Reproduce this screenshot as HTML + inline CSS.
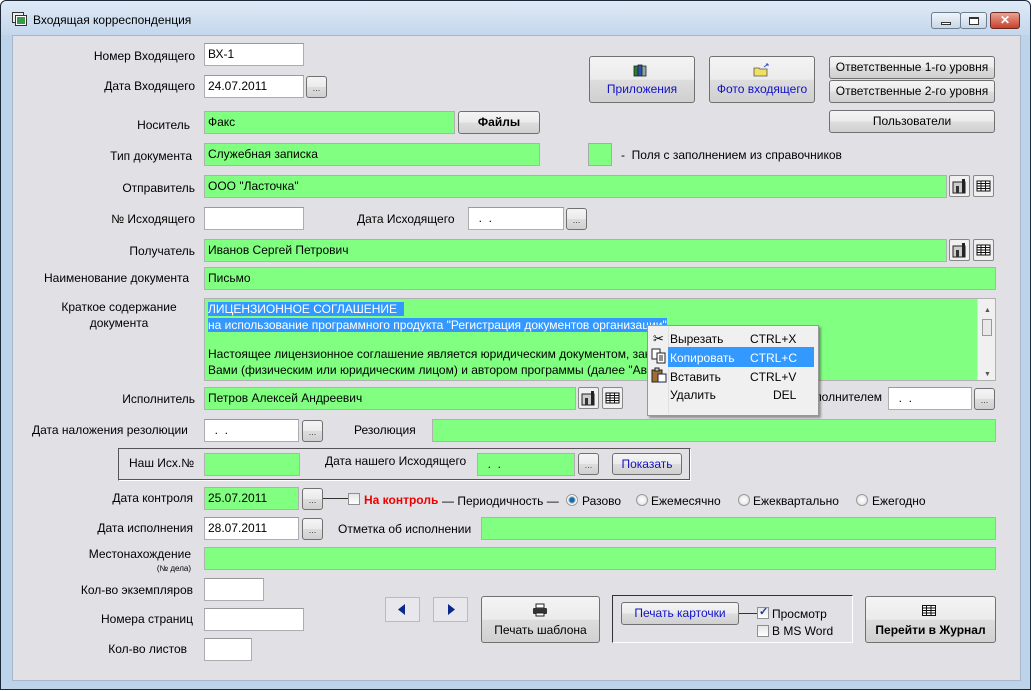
<!DOCTYPE html>
<html><head><meta charset="utf-8">
<style>
*{box-sizing:border-box;margin:0;padding:0}
body{width:1032px;height:691px;overflow:hidden;background:#fff;font-family:"Liberation Sans",Arial,sans-serif;font-size:12px;color:#000}
.win{position:absolute;left:0;top:0;width:1031px;height:690px;border:1px solid #1d2a3a;border-radius:6px 6px 0 0;background:#bcd3ea}
.title{position:absolute;left:0;top:0;width:100%;height:34px;background:linear-gradient(#dfeaf6,#c4d7ec);border-radius:6px 6px 0 0}
.content{position:absolute;left:11px;top:34px;width:1009px;height:646px;background:#e1e0e5;border:1px solid #a7b7c9}
.a{position:absolute;white-space:nowrap}
.l{position:absolute;white-space:nowrap;text-align:right}
.in{position:absolute;background:#fff;border:1px solid #abadb3;border-top-color:#999;padding:4px 3px;height:23px;line-height:13px;white-space:nowrap;overflow:hidden}
.g{background:#80ff80;border-color:#b0b0b0}
.btn{position:absolute;border:1px solid #707070;border-radius:3px;background:linear-gradient(#f4f4f4 0%,#ebebeb 50%,#dddddd 51%,#d0d0d0 100%);text-align:center;line-height:20px;white-space:nowrap}
.dots{width:21px;height:22px;font-size:9px;line-height:22px;color:#444}
.ib{position:absolute;width:21px;height:22px;border:1px solid #888;border-radius:2px;background:#f0f0f0}
.chk{position:absolute;width:12px;height:12px;border:1px solid #8f8f8f;background:linear-gradient(#e6e6e6,#fff)}
.rad{position:absolute;width:12px;height:12px;border:1px solid #999;border-radius:50%;background:radial-gradient(#fff,#ddd)}
.blue{color:#1010c8}
</style></head><body>
<div class="win">
<div class="title">
 <svg class="a" style="left:11px;top:11px" width="16" height="15"><rect x="0.5" y="0.5" width="11" height="10" fill="#eee" stroke="#333"/><rect x="3.5" y="3.5" width="11" height="10" fill="#fff" stroke="#333"/><rect x="5" y="5" width="8" height="7" fill="#3a9a4a"/></svg>
 <div class="a" style="left:32px;top:12px;font-size:12px">Входящая корреспонденция</div>
 <div class="a" style="left:930px;top:11px;width:30px;height:17px;border:1px solid #6d7e91;border-radius:3px;background:linear-gradient(#f0f4f9,#c9d6e6)"><div style="position:absolute;left:9px;top:9px;width:10px;height:3px;border:1px solid #333;background:#fff"></div></div>
 <div class="a" style="left:959px;top:11px;width:27px;height:17px;border:1px solid #6d7e91;border-radius:3px;background:linear-gradient(#f0f4f9,#c9d6e6)"><div style="position:absolute;left:8px;top:4px;width:10px;height:8px;border:1px solid #333;border-top-width:2px;background:#fff"></div></div>
 <div class="a" style="left:989px;top:11px;width:30px;height:17px;border:1px solid #6b2a20;border-radius:3px;background:linear-gradient(#e8a393,#c7402a);color:#fff;font-weight:bold;text-align:center;line-height:15px;font-size:12px">✕</div>
</div>
<div class="content"></div>

<div class="l" style="left:60px;width:134px;top:48px">Номер Входящего</div>
<div class="in" style="left:203px;top:42px;width:100px">ВХ-1</div>
<div class="l" style="left:60px;width:134px;top:78px">Дата Входящего</div>
<div class="in" style="left:203px;top:74px;width:100px">24.07.2011</div>
<div class="btn dots" style="left:305px;top:75px">...</div>

<div class="btn blue" style="left:588px;top:55px;width:106px;height:47px;padding-top:24px;line-height:16px">Приложения</div>
<svg class="a" style="left:632px;top:62px" width="16" height="14"><rect x="1" y="3" width="4" height="10" fill="#2a7a3a" stroke="#222" stroke-width=".8"/><rect x="5" y="2" width="4" height="11" fill="#3050b0" stroke="#222" stroke-width=".8"/><rect x="9" y="3" width="4" height="10" fill="#8aa" stroke="#222" stroke-width=".8"/></svg>
<div class="btn blue" style="left:708px;top:55px;width:106px;height:47px;padding-top:24px;line-height:16px">Фото входящего</div>
<svg class="a" style="left:752px;top:62px" width="18" height="14"><path d="M1 5h5l1 1h7v7H1z" fill="#f0e060" stroke="#555" stroke-width=".8"/><path d="M11 4l4-3M15 1v2M15 1h-2" stroke="#3050c0" fill="none"/></svg>
<div class="btn" style="left:828px;top:55px;width:166px;height:23px">Ответственные 1-го уровня</div>
<div class="btn" style="left:828px;top:79px;width:166px;height:23px">Ответственные 2-го уровня</div>
<div class="btn" style="left:828px;top:109px;width:166px;height:23px">Пользователи</div>

<div class="l" style="left:60px;width:129px;top:117px">Носитель</div>
<div class="in g" style="left:203px;top:110px;width:251px">Факс</div>
<div class="btn" style="left:457px;top:110px;width:82px;height:23px;font-weight:bold">Файлы</div>
<div class="l" style="left:60px;width:131px;top:148px">Тип документа</div>
<div class="in g" style="left:203px;top:142px;width:336px">Служебная записка</div>
<div class="a" style="left:587px;top:142px;width:24px;height:23px;background:#80ff80;border:1px solid #aaa"></div>
<div class="a" style="left:620px;top:147px">-&nbsp; Поля с заполнением из справочников</div>

<div class="l" style="left:60px;width:134px;top:180px">Отправитель</div>
<div class="in g" style="left:203px;top:174px;width:743px">ООО "Ласточка"</div>
<div class="ib" style="left:948px;top:174px"><svg width="19" height="20"><rect x="3" y="6" width="12" height="11" fill="#ccc" stroke="#222"/><rect x="6" y="10" width="3" height="7" fill="#333"/><rect x="12" y="3" width="3" height="14" fill="#222"/></svg></div>
<div class="ib" style="left:972px;top:174px"><svg width="19" height="20"><rect x="3" y="5" width="13" height="10" fill="#fff" stroke="#111"/><path d="M3 7.5h13M3 10h13M3 12.5h13M7 5v10M11.5 5v10" stroke="#111"/></svg></div>

<div class="l" style="left:60px;width:134px;top:211px">№ Исходящего</div>
<div class="in" style="left:203px;top:206px;width:100px"></div>
<div class="a" style="left:356px;top:211px">Дата Исходящего</div>
<div class="in" style="left:467px;top:206px;width:96px">&nbsp;&nbsp;.&nbsp;&nbsp;.</div>
<div class="btn dots" style="left:565px;top:207px">...</div>

<div class="l" style="left:60px;width:134px;top:243px">Получатель</div>
<div class="in g" style="left:203px;top:238px;width:743px">Иванов Сергей Петрович</div>
<div class="ib" style="left:948px;top:238px"><svg width="19" height="20"><rect x="3" y="6" width="12" height="11" fill="#ccc" stroke="#222"/><rect x="6" y="10" width="3" height="7" fill="#333"/><rect x="12" y="3" width="3" height="14" fill="#222"/></svg></div>
<div class="ib" style="left:972px;top:238px"><svg width="19" height="20"><rect x="3" y="5" width="13" height="10" fill="#fff" stroke="#111"/><path d="M3 7.5h13M3 10h13M3 12.5h13M7 5v10M11.5 5v10" stroke="#111"/></svg></div>

<div class="a" style="left:43px;top:270px">Наименование документа</div>
<div class="in g" style="left:203px;top:266px;width:792px">Письмо</div>

<div class="a" style="left:60px;top:298px;width:116px;text-align:center;line-height:16px">Краткое содержание<br>документа</div>
<div class="in g" style="left:203px;top:297px;width:792px;height:83px;padding:2px 3px;line-height:16px">
<span style="background:#3399ff;color:#fff">ЛИЦЕНЗИОННОЕ СОГЛАШЕНИЕ&nbsp;&nbsp;</span><br>
<span style="background:#3399ff;color:#fff">на использование программного продукта "Регистрация документов организации"</span><br>
<div style="height:13px"></div>
Настоящее лицензионное соглашение является юридическим документом, заключаемым между<br>
Вами (физическим или юридическим лицом) и автором программы (далее "Автор")
<div style="position:absolute;right:0;top:0;width:18px;height:81px;background:#f0f0f0;border-left:1px solid #ddd"><div style="position:absolute;left:4px;top:20px;width:10px;height:17px;border:1px solid #999;background:#e8e8e8"></div><div style="position:absolute;left:6px;top:4px;font-size:7px;color:#555">▲</div><div style="position:absolute;left:6px;top:68px;font-size:7px;color:#555">▼</div></div>
</div>

<div class="l" style="left:60px;width:134px;top:391px">Исполнитель</div>
<div class="in g" style="left:203px;top:386px;width:372px">Петров Алексей Андреевич</div>
<div class="ib" style="left:577px;top:386px"><svg width="19" height="20"><rect x="3" y="6" width="12" height="11" fill="#ccc" stroke="#222"/><rect x="6" y="10" width="3" height="7" fill="#333"/><rect x="12" y="3" width="3" height="14" fill="#222"/></svg></div>
<div class="ib" style="left:601px;top:386px"><svg width="19" height="20"><rect x="3" y="5" width="13" height="10" fill="#fff" stroke="#111"/><path d="M3 7.5h13M3 10h13M3 12.5h13M7 5v10M11.5 5v10" stroke="#111"/></svg></div>
<div class="l" style="left:680px;width:201px;top:389px">Контроль за исполнителем</div>
<div class="in" style="left:887px;top:386px;width:84px">&nbsp;&nbsp;.&nbsp;&nbsp;.</div>
<div class="btn dots" style="left:973px;top:387px">...</div>

<div class="a" style="left:646px;top:324px;width:172px;height:91px;background:#f0f0f0;border:1px solid #979797;box-shadow:2px 2px 2px rgba(0,0,0,.35);font-size:12px">
 <div class="a" style="left:20px;top:1px;width:1px;height:87px;background:#e0e0e0"></div>
 <div class="a" style="left:20px;top:21px;width:146px;height:20px;background:#3399ff"></div>
 <div class="a" style="left:5px;top:5px;font-size:13px">✂</div>
 <div class="a" style="left:22px;top:6px">Вырезать</div><div class="a" style="left:102px;top:6px">CTRL+X</div>
 <div class="a" style="left:22px;top:25px;color:#fff">Копировать</div><div class="a" style="left:102px;top:25px;color:#fff">CTRL+C</div>
 <svg class="a" style="left:3px;top:22px" width="16" height="16"><rect x="1" y="1" width="8" height="10" fill="#fff" stroke="#222"/><rect x="6" y="5" width="8" height="10" fill="#fff" stroke="#222"/><path d="M8 8h4M8 10h4M8 12h4" stroke="#222"/></svg>
 <svg class="a" style="left:3px;top:41px" width="16" height="16"><rect x="1" y="3" width="10" height="12" fill="#a07030" stroke="#222"/><rect x="4" y="1" width="4" height="3" fill="#ccc" stroke="#222"/><rect x="7" y="7" width="8" height="8" fill="#fff" stroke="#224"/></svg>
 <div class="a" style="left:22px;top:44px">Вставить</div><div class="a" style="left:102px;top:44px">CTRL+V</div>
 <div class="a" style="left:22px;top:62px">Удалить</div><div class="a" style="left:125px;top:62px">DEL</div>
</div>

<div class="a" style="left:31px;top:422px">Дата наложения резолюции</div>
<div class="in" style="left:203px;top:418px;width:95px">&nbsp;&nbsp;.&nbsp;&nbsp;.</div>
<div class="btn dots" style="left:301px;top:419px">...</div>
<div class="a" style="left:353px;top:422px">Резолюция</div>
<div class="in g" style="left:431px;top:418px;width:564px"></div>

<div class="a" style="left:117px;top:447px;width:573px;height:33px;border:1px solid #555;border-right-color:#fff;border-bottom-color:#fff;box-shadow:inset -1px -1px 0 #555"></div>
<div class="a" style="left:128px;top:455px">Наш Исх.№</div>
<div class="in g" style="left:203px;top:452px;width:96px"></div>
<div class="a" style="left:324px;top:453px">Дата нашего Исходящего</div>
<div class="in g" style="left:476px;top:452px;width:98px">&nbsp;&nbsp;.&nbsp;&nbsp;.</div>
<div class="btn dots" style="left:577px;top:452px">...</div>
<div class="btn blue" style="left:611px;top:452px;width:70px;height:22px">Показать</div>

<div class="l" style="left:60px;width:132px;top:490px">Дата контроля</div>
<div class="in g" style="left:203px;top:486px;width:95px">25.07.2011</div>
<div class="btn dots" style="left:301px;top:487px">...</div>
<div class="a" style="left:322px;top:497px;width:25px;height:1px;background:#333"></div>
<div class="chk" style="left:347px;top:492px"></div>
<div class="a" style="left:363px;top:492px;color:#e00;font-weight:bold">На контроль</div>
<div class="a" style="left:441px;top:493px">— Периодичность —</div>
<div class="rad" style="left:565px;top:493px;background:radial-gradient(#1a6aa8 30%,#9bc 45%,#fff 60%)"></div>
<div class="a" style="left:581px;top:493px">Разово</div>
<div class="rad" style="left:635px;top:493px"></div><div class="a" style="left:650px;top:493px">Ежемесячно</div>
<div class="rad" style="left:737px;top:493px"></div><div class="a" style="left:752px;top:493px">Ежеквартально</div>
<div class="rad" style="left:855px;top:493px"></div><div class="a" style="left:871px;top:493px">Ежегодно</div>

<div class="l" style="left:60px;width:132px;top:520px">Дата исполнения</div>
<div class="in" style="left:203px;top:516px;width:95px">28.07.2011</div>
<div class="btn dots" style="left:301px;top:517px">...</div>
<div class="a" style="left:337px;top:521px">Отметка об исполнении</div>
<div class="in g" style="left:480px;top:516px;width:515px"></div>

<div class="l" style="left:60px;width:130px;top:546px">Местонахождение</div>
<div class="l" style="left:60px;width:130px;top:563px;font-size:8px">(№ дела)</div>
<div class="in g" style="left:203px;top:546px;width:792px"></div>

<div class="l" style="left:40px;width:152px;top:582px">Кол-во экземпляров</div>
<div class="in" style="left:203px;top:577px;width:60px"></div>
<div class="l" style="left:40px;width:152px;top:611px">Номера страниц</div>
<div class="in" style="left:203px;top:607px;width:100px"></div>
<div class="l" style="left:40px;width:146px;top:641px">Кол-во листов</div>
<div class="in" style="left:203px;top:637px;width:48px"></div>

<div class="a" style="left:384px;top:596px;width:35px;height:25px;border:1px solid #bbb;background:#e8e8ec"><svg width="33" height="23"><path d="M19 6v11l-7-5.5z" fill="#0a2a8a"/></svg></div>
<div class="a" style="left:432px;top:596px;width:35px;height:25px;border:1px solid #bbb;background:#e8e8ec"><svg width="33" height="23"><path d="M14 6v11l7-5.5z" fill="#0a2a8a"/></svg></div>
<div class="btn" style="left:480px;top:595px;width:119px;height:47px;padding-top:25px;line-height:16px">Печать шаблона</div>
<svg class="a" style="left:531px;top:602px" width="16" height="14"><rect x="4" y="1" width="8" height="4" fill="#fff" stroke="#222"/><rect x="1" y="5" width="14" height="6" rx="1" fill="#333"/><rect x="4" y="10" width="8" height="3" fill="#fff" stroke="#222"/></svg>

<div class="a" style="left:611px;top:594px;width:241px;height:48px;border:1px solid #333;border-right-color:#fff;border-bottom-color:#fff"></div>
<div class="btn blue" style="left:620px;top:601px;width:118px;height:23px">Печать карточки</div>
<div class="a" style="left:738px;top:612px;width:18px;height:1px;background:#333"></div>
<div class="chk" style="left:756px;top:606px"><div style="position:absolute;left:1px;top:-3px;font-size:11px;color:#1a3a9a;font-weight:bold">✓</div></div>
<div class="a" style="left:771px;top:606px">Просмотр</div>
<div class="chk" style="left:756px;top:624px"></div>
<div class="a" style="left:771px;top:623px">В MS Word</div>

<div class="btn" style="left:864px;top:595px;width:131px;height:47px;padding-top:25px;line-height:16px;font-weight:bold">Перейти в Журнал</div>
<svg class="a" style="left:921px;top:604px" width="14" height="11"><rect x=".5" y=".5" width="13" height="10" fill="#fff" stroke="#111"/><path d="M0 3h14M0 5.5h14M0 8h14M4.5 0v11M9 0v11" stroke="#111"/></svg>
</div>
</body></html>
